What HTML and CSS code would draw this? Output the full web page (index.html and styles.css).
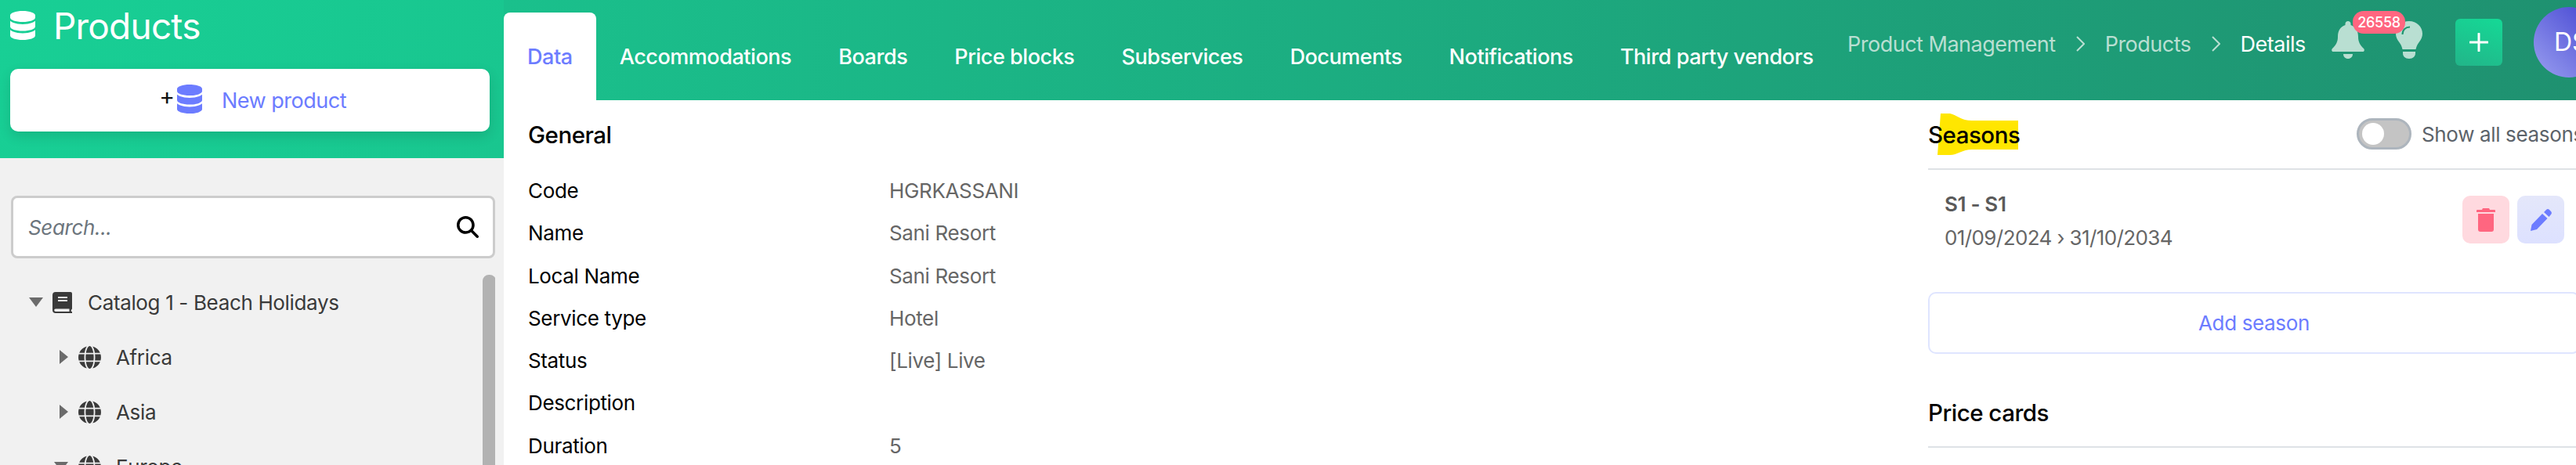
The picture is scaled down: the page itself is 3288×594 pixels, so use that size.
FILE: index.html
```html
<!DOCTYPE html>
<html lang="en">
<head>
  <meta charset="UTF-8">
  <title>Products</title>
  <link rel="stylesheet" href="styles.css">
</head>
<body>
  <div class="page">
    <aside class="sidebar">
      <div class="side-head">
        <h1 class="side-title">
          <svg class="db-icon" viewBox="0 0 32 37"><use href="#db"/></svg>
          <span>Products</span>
        </h1>
        <button class="new-btn">
          <span class="new-plus">+</span>
          <svg class="db-icon blue" viewBox="0 0 32 37"><use href="#db"/></svg>
          <span class="new-label">New product</span>
        </button>
      </div>
      <div class="side-body">
        <div class="search">
          <span class="search-text">Search...</span>
          <svg class="search-icon" viewBox="0 0 512 512"><path d="M416 208c0 46-15 88-40 123l127 126c12 13 12 33 0 46s-33 12-46 0L331 376c-35 25-77 40-123 40C93 416 0 323 0 208S93 0 208 0s208 93 208 208zM208 352a144 144 0 1 0 0-288 144 144 0 1 0 0 288z"/></svg>
        </div>
        <div class="tree-wrap">
          <ul class="tree">
            <li class="node root">
              <span class="caret down"></span>
              <svg class="book" viewBox="0 0 25 27"><path d="M4 0h19a2 2 0 0 1 2 2v19c0 1-.6 1.600-1.200 1.800v2.200h.7a1 1 0 0 1 0 2H4a4 4 0 0 1-4-4V4a4 4 0 0 1 4-4zm3 6v2h12V6H7zm0 4v2h12v-2H7zM4 21.500a1.800 1.800 0 0 0 0 3.600h17.500v-3.600H4z"/></svg>
              <span>Catalog 1 - Beach Holidays</span>
            </li>
            <li class="node">
              <span class="caret right"></span>
              <svg class="globe" viewBox="0 0 29 29"><use href="#globe"/></svg>
              <span>Africa</span>
            </li>
            <li class="node">
              <span class="caret right"></span>
              <svg class="globe" viewBox="0 0 29 29"><use href="#globe"/></svg>
              <span>Asia</span>
            </li>
            <li class="node">
              <span class="caret down"></span>
              <svg class="globe" viewBox="0 0 29 29"><use href="#globe"/></svg>
              <span>Europe</span>
            </li>
          </ul>
          <div class="scroll-thumb"></div>
        </div>
      </div>
    </aside>

    <main class="main">
      <header class="topbar">
        <nav class="tabs">
          <a class="tab active">Data</a>
          <a class="tab">Accommodations</a>
          <a class="tab">Boards</a>
          <a class="tab">Price blocks</a>
          <a class="tab">Subservices</a>
          <a class="tab">Documents</a>
          <a class="tab">Notifications</a>
          <a class="tab">Third party vendors</a>
        </nav>
        <div class="crumbs">
          <span>Product Management</span>
          <svg class="chev" viewBox="0 0 11 20"><path d="M1 1l9 9-9 9"/></svg>
          <span>Products</span>
          <svg class="chev" viewBox="0 0 11 20"><path d="M1 1l9 9-9 9"/></svg>
          <span class="current">Details</span>
        </div>
        <div class="top-icons">
          <svg class="bell" viewBox="0 0 43 48"><path d="M21 0c2 0 3.500 1.500 3.500 3.500V5C31 7 34 12.500 34 20c0 6 2 10 7 15 1.500 1.500 1 4-1.500 4H2.500C0 39-.5 36.500 1 35c5-5 7-9 7-15C8 12.500 11 7 17.500 5V3.500C17.500 1.500 19 0 21 0zM15 42h12c0 3.500-2.500 6-6 6s-6-2.500-6-6z"/></svg>
          <svg class="bulb" viewBox="0 0 34 48"><path d="M17 0c9.500 0 17 7 17 16 0 4-1.500 7-4 10.500-2 2.500-3.500 5-4.500 9.500h-17c-1-4.500-2.500-7-4.500-9.500C1.500 23 0 20 0 16 0 7 7.500 0 17 0zM9 39h16v2c0 4-3 7-8 7s-8-3-8-7z"/><path class="bulb-line" d="M18 7.500c-5.500 0-9.500 3.500-9.500 9.500"/></svg>
          <span class="badge">26558</span>
        </div>
        <button class="add-btn">
          <svg viewBox="0 0 24 24"><path d="M12 1v22M1 12h22"/></svg>
        </button>
        <div class="avatar">DS</div>
      </header>

      <div class="content">
        <section class="general">
          <h2 class="section-title">General</h2>
          <dl class="fields">
            <dt>Code</dt><dd>HGRKASSANI</dd>
            <dt>Name</dt><dd>Sani Resort</dd>
            <dt>Local Name</dt><dd>Sani Resort</dd>
            <dt>Service type</dt><dd>Hotel</dd>
            <dt>Status</dt><dd>[Live] Live</dd>
            <dt>Description</dt><dd></dd>
            <dt>Duration</dt><dd>5</dd>
          </dl>
        </section>

        <section class="side-panel">
          <div class="panel-head">
            <h2 class="section-title">
              <svg class="marker" viewBox="0 0 103 53"><path d="M4 0h12c9 2 14 9 28 9h59v37H44c-12 0-19 7-28 7H0z"/></svg>
              <span>Seasons</span>
            </h2>
            <label class="switch-row">
              <span class="switch"><span class="knob"></span></span>
              <span>Show all seasons</span>
            </label>
          </div>
          <div class="season">
            <div>
              <div class="season-name">S1 - S1</div>
              <div class="season-dates">01/09/2024 › 31/10/2034</div>
            </div>
            <div class="season-actions">
              <button class="icon-btn del">
                <svg viewBox="0 0 24 30"><path d="M8 0h8l1 2h6a1 1 0 0 1 1 1v2H0V3a1 1 0 0 1 1-1h6zM2 7h20v20a3 3 0 0 1-3 3H5a3 3 0 0 1-3-3z"/></svg>
              </button>
              <button class="icon-btn edit">
                <svg viewBox="0 0 28 28"><path d="M21 1a3 3 0 0 1 4 0l2 2a3 3 0 0 1 0 4l-2.500 3L18 4zM16 6l6.500 6L9 26l-8 2 1.500-8z"/></svg>
              </button>
            </div>
          </div>
          <button class="add-season">Add season</button>
          <h2 class="section-title cards">Price cards</h2>
        </section>
      </div>
    </main>
  </div>

  <svg class="defs" width="0" height="0">
    <symbol id="db" viewBox="0 0 32 37">
      <path d="M32 5.500v3C32 11.500 25 14 16 14S0 11.500 0 8.500v-3C0 2.500 7 0 16 0s16 2.500 16 5.500zM28 15c1.500-.6 2.900-1.300 4-2.200V20c0 3-7 5.500-16 5.500S0 23 0 20v-7.200c1.100.9 2.500 1.600 4 2.200 3.200 1.200 7.400 2 12 2s8.800-.8 12-2zM0 24.300c1.100.9 2.500 1.600 4 2.200 3.200 1.200 7.400 2 12 2s8.800-.8 12-2c1.500-.6 2.900-1.300 4-2.200v7.200C32 34.500 25 37 16 37S0 34.500 0 31.500z"/>
    </symbol>
    <symbol id="globe" viewBox="0 0 29 29">
      <path d="M14.500 0c2 0 4 4 4.700 8.800H9.800C10.500 4 12.500 0 14.500 0zM8 8.800H1.200C3 4.600 6.500 1.500 10.800.5 9.400 2.500 8.400 5.500 8 8.800zM21 8.800c-.4-3.300-1.400-6.300-2.800-8.300 4.300 1 7.800 4.100 9.600 8.300zM.6 10.600H7.800a30 30 0 0 0 0 7.800H.6a14.500 14.500 0 0 1 0-7.800zm9 0h9.800a30 30 0 0 1 0 7.800H9.600a30 30 0 0 1 0-7.800zm11.600 0h7.200a14.500 14.500 0 0 1 0 7.800h-7.200a30 30 0 0 0 0-7.800zM1.200 20.200H8c.4 3.300 1.400 6.300 2.800 8.300C6.500 27.500 3 24.400 1.200 20.200zm8.600 0h9.400C18.500 25 16.500 29 14.500 29s-4-4-4.700-8.800zm11.200 0h6.800c-1.800 4.200-5.300 7.300-9.600 8.300 1.400-2 2.400-5 2.800-8.300z"/>
    </symbol>
  </svg>
</body>
</html>
```

FILE: styles.css
```css
* {
  box-sizing: border-box;
}
html, body {
  margin: 0;
  padding: 0;
  height: 594px;
  overflow: hidden;
}
body {
  font-family: Inter, Roboto, sans-serif;
  font-size: 26px;
  letter-spacing: -0.35px;
  background: #fff;
  color: #000;
}
.defs {
  position: absolute;
}
.page {
  display: flex;
  width: 3288px;
  height: 594px;
  overflow: hidden;
}

/* sidebar */
.sidebar {
  flex: 0 0 643px;
  background: #f1f1f1;
}
.side-head {
  height: 202px;
  padding: 14px 18px 0 13px;
  background: linear-gradient(100deg, #18cf95, #19c68f);
}
.side-title {
  display: flex;
  align-items: center;
  gap: 23px;
  margin: 0;
  height: 37px;
  color: #fff;
  font-size: 46px;
  font-weight: 400;
  letter-spacing: -0.8px;
}
.db-icon {
  width: 32px;
  height: 37px;
  fill: #fff;
}
.db-icon.blue {
  fill: #6c7cff;
}
.new-btn {
  display: flex;
  align-items: center;
  justify-content: center;
  width: 612px;
  height: 80px;
  margin-top: 37px;
  padding: 0 0 4px 4px;
  border: none;
  border-radius: 10px;
  background: #fff;
  box-shadow: 0 6px 16px rgba(0, 0, 0, 0.12);
  font: inherit;
  letter-spacing: inherit;
}
.new-plus {
  width: 26px;
  color: #111;
  font-size: 30px;
  line-height: 30px;
  margin-top: -6px;
}
.new-label {
  margin-left: 25px;
  margin-top: 4px;
  color: #6c7cff;
  font-size: 27px;
  letter-spacing: -0.5px;
}
.side-body {
  padding: 48px 11px 0 14px;
}
.search {
  display: flex;
  align-items: center;
  justify-content: space-between;
  height: 80px;
  padding: 0 18px 0 19px;
  background: #fff;
  border: 3px solid #ccc;
  border-radius: 8px;
}
.search-text {
  color: #6c757d;
  font-style: italic;
}
.search-icon {
  width: 28px;
  height: 28px;
}
.tree-wrap {
  position: relative;
  height: 243px;
  margin-top: 21px;
  overflow: hidden;
}
.tree {
  margin: 0;
  padding: 21px 0 0 23px;
  list-style: none;
  color: #3a3a3a;
}
.node {
  display: flex;
  align-items: center;
  height: 70px;
  padding-left: 39px;
}
.node.root {
  height: 28px;
  margin-bottom: 21px;
  padding-left: 0;
}
.caret {
  width: 0;
  height: 0;
  flex: none;
}
.caret.down {
  margin-left: -7px;
  margin-right: 13px;
  border-left: 9px solid transparent;
  border-right: 9px solid transparent;
  border-top: 12px solid #6b6b6b;
}
.caret.right {
  margin-right: 13px;
  border-top: 9px solid transparent;
  border-bottom: 9px solid transparent;
  border-left: 11px solid #6b6b6b;
}
.node.root .caret {
  margin-left: 0;
  margin-right: 12px;
}
.book {
  width: 25px;
  height: 27px;
  margin-right: 20px;
  fill: #3a3a3a;
}
.globe {
  width: 29px;
  height: 29px;
  margin-right: 19px;
  fill: #3a3a3a;
}
.scroll-thumb {
  position: absolute;
  top: 0;
  right: -1px;
  bottom: 0;
  width: 17px;
  background: #b2b2b2;
  border-radius: 8px 8px 0 0;
}

/* top bar */
.main {
  flex: 1;
  min-width: 0;
  overflow: hidden;
}
.topbar {
  display: flex;
  height: 128px;
  background: linear-gradient(96deg, #1ac08c, #1f9170);
  color: #fff;
}
.tabs {
  display: flex;
  flex: none;
  width: 1715px;
  padding-top: 16px;
}
.tab {
  display: flex;
  align-items: center;
  height: 112px;
  padding: 0 30px;
  font-size: 27px;
  font-weight: 500;
  letter-spacing: -0.45px;
}
.tab.active {
  background: #fff;
  color: #6c7cff;
  border-radius: 8px 8px 0 0;
}
.crumbs {
  display: flex;
  flex: none;
  align-items: center;
  gap: 26px;
  width: 618px;
  height: 112px;
  color: #b9dfd2;
  font-size: 27px;
  letter-spacing: -0.5px;
}
.chev {
  width: 11px;
  height: 20px;
  fill: none;
  stroke: #b9dfd2;
  stroke-width: 2;
}
.crumbs .current {
  color: #fff;
}
.top-icons {
  position: relative;
  display: flex;
  flex: none;
  justify-content: space-between;
  width: 116px;
  height: 48px;
  margin-top: 27px;
}
.bell, .bulb {
  height: 48px;
  fill: #b9dfd2;
}
.bell {
  width: 43px;
}
.bulb {
  width: 34px;
}
.bulb-line {
  fill: none;
  stroke: #1f9570;
  stroke-width: 2;
}
.badge {
  position: absolute;
  top: -13px;
  left: 27px;
  width: 67px;
  height: 29px;
  background: #ff6680;
  border-radius: 14px;
  font-size: 18px;
  font-weight: 500;
  line-height: 29px;
  text-align: center;
  letter-spacing: -0.3px;
}
.add-btn {
  flex: none;
  width: 60px;
  height: 60px;
  margin: 24px 0 0 42px;
  padding: 0;
  border: none;
  border-radius: 6px;
  background: linear-gradient(200deg, #15d996, #22b589);
}
.add-btn svg {
  display: block;
  width: 24px;
  height: 24px;
  margin: auto;
  fill: none;
  stroke: #fff;
  stroke-width: 3;
  stroke-linecap: round;
}
.avatar {
  flex: none;
  width: 90px;
  height: 90px;
  margin: 9px 0 0 40px;
  padding-left: 26px;
  border-radius: 50%;
  background: linear-gradient(45deg, #9a9ff0, #4040d0);
  font-size: 32px;
  line-height: 90px;
  letter-spacing: 0;
}

/* content */
.content {
  display: grid;
  grid-template-columns: 1787px 832px;
  padding: 22px 0 0 31px;
}
.section-title {
  position: relative;
  margin: 0;
  font-size: 29.500px;
  font-weight: 500;
  line-height: 44px;
  letter-spacing: -0.5px;
}
.section-title span {
  position: relative;
}
.marker {
  position: absolute;
  top: -5px;
  left: 12px;
  width: 103px;
  height: 53px;
  fill: #ffe600;
}
.fields {
  display: grid;
  grid-template-columns: 461px 1fr;
  grid-auto-rows: 54.300px;
  margin: 23px 0 0;
  line-height: 54.300px;
}
.fields dd {
  margin: 0;
  color: #666;
}
.panel-head {
  display: flex;
  justify-content: space-between;
  align-items: flex-start;
  height: 67px;
  border-bottom: 2px solid #dee2e6;
  white-space: nowrap;
}
.switch-row {
  display: flex;
  align-items: center;
  gap: 13px;
  width: 285px;
  height: 40px;
  margin-top: 1px;
  color: #5c636a;
}
.switch {
  flex: none;
  display: block;
  width: 70px;
  height: 40px;
  padding: 3px 0 0 4px;
  background: #c4c4c4;
  border: 3px solid #adb5bd;
  border-radius: 20px;
}
.knob {
  display: block;
  width: 28px;
  height: 28px;
  background: #fff;
  border-radius: 50%;
}
.season {
  display: flex;
  justify-content: space-between;
  height: 156px;
  padding: 24px 20px 0 21px;
  color: #666;
}
.season-name {
  color: #5a5a5a;
  font-weight: 600;
  line-height: 40px;
}
.season-dates {
  margin-top: 3px;
  line-height: 40px;
  letter-spacing: -0.6px;
}
.season-actions {
  display: flex;
  gap: 10px;
  margin-top: 9px;
}
.icon-btn {
  display: flex;
  align-items: center;
  justify-content: center;
  width: 60px;
  height: 61px;
  padding: 0;
  border: none;
  border-radius: 10px;
}
.icon-btn svg {
  width: 28px;
  height: 28px;
}
.icon-btn.del svg {
  width: 24px;
  height: 30px;
}
.icon-btn.del {
  background: #ffd9df;
  fill: #ff6680;
}
.icon-btn.edit {
  background: linear-gradient(#e4e7fa, #dde1ff);
  fill: #6c7cff;
}
.add-season {
  display: block;
  width: 832px;
  height: 79px;
  padding: 0;
  background: #fff;
  border: 2px solid #dfe5ff;
  border-radius: 10px;
  color: #6c7cff;
  font: inherit;
  letter-spacing: inherit;
}
.section-title.cards {
  height: 120px;
  padding-top: 53px;
  border-bottom: 2px solid #dee2e6;
}
```
